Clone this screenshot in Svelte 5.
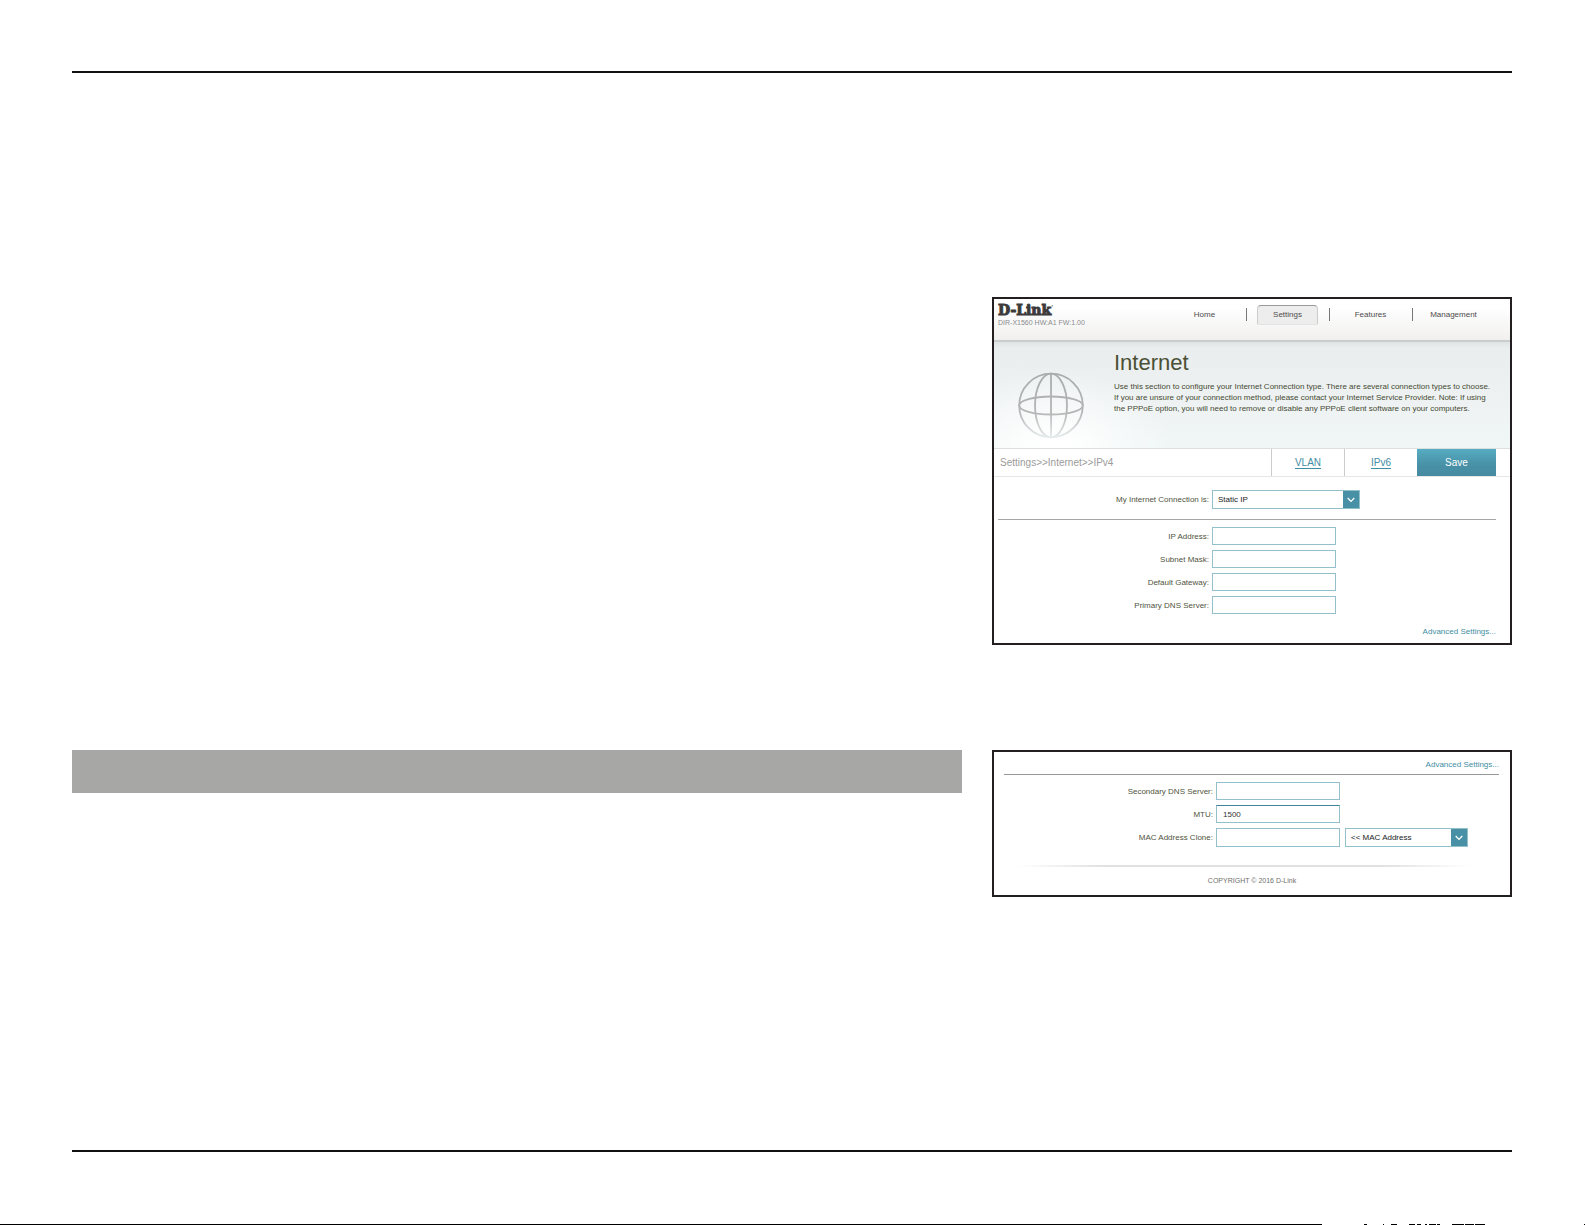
<script>
  const navItems = ['Home', 'Settings', 'Features', 'Management'];
  const fields = [
    { id: 'ip', label: 'IP Address:' },
    { id: 'mask', label: 'Subnet Mask:' },
    { id: 'gateway', label: 'Default Gateway:' },
    { id: 'dns1', label: 'Primary DNS Server:' }
  ];
  const edgeMarks = [
    [0, 1322], [1364, 3], [1383, 1], [1391, 6], [1409, 6], [1417, 4],
    [1425, 2], [1429, 7], [1437, 3], [1452, 12], [1465, 9], [1475, 10], [1584, 1]
  ];
</script>

{#snippet arrow()}
  <span class="arrow" aria-hidden="true">
    <svg viewBox="0 0 17 17"><path d="M5 7l3.5 3.5L12 7" fill="none" stroke="#fff" stroke-width="1.4" /></svg>
  </span>
{/snippet}

<div class="page">
  <main class="sheet">
    <section class="panel" aria-label="Internet settings">
      <header class="top">
        <div class="brand">
          <div class="logo">D-Link<span class="dot">·</span></div>
          <div class="model">DIR-X1560 HW:A1 FW:1.00</div>
        </div>
        <nav>
          {#each navItems as item}
            <div class="cell"><a href="#{item}" class:active={item === 'Settings'}>{item}</a></div>
          {/each}
        </nav>
      </header>
      <div class="banner">
        <svg class="globe" viewBox="0 0 66 68" aria-hidden="true">
          <defs>
            <linearGradient id="fade" gradientUnits="userSpaceOnUse" x1="0" y1="0" x2="0" y2="67">
              <stop offset="0" stop-color="#aaacac" />
              <stop offset="0.6" stop-color="#b4b6b6" />
              <stop offset="1" stop-color="#e9eeee" />
            </linearGradient>
          </defs>
          <g fill="none" stroke="url(#fade)" stroke-width="1.8">
            <circle cx="33" cy="33.5" r="31.8" />
            <ellipse cx="33" cy="33.5" rx="16" ry="31.8" />
            <ellipse cx="33" cy="33.5" rx="31.8" ry="9" />
            <path d="M33 2L33.1 65" />
          </g>
        </svg>
        <div class="intro">
          <h1>Internet</h1>
          <p>
            Use this section to configure your Internet Connection type. There are several connection types to choose.<br />
            If you are unsure of your connection method, please contact your Internet Service Provider. Note: If using<br />
            the PPPoE option, you will need to remove or disable any PPPoE client software on your computers.
          </p>
        </div>
      </div>
      <div class="toolbar">
        <div class="crumbs">Settings&gt;&gt;Internet&gt;&gt;IPv4</div>
        <div class="tab"><a href="#vlan">VLAN</a></div>
        <div class="tab"><a href="#ipv6">IPv6</a></div>
        <button class="save" type="button">Save</button>
      </div>
      <div class="connection row">
        <label for="type">My Internet Connection is:</label>
        <div class="select type">
          <select id="type"><option>Static IP</option></select>
          {@render arrow()}
        </div>
      </div>
      <div class="fields">
        {#each fields as f}
          <div class="row">
            <label for={f.id}>{f.label}</label>
            <input id={f.id} type="text" />
          </div>
        {/each}
      </div>
      <a class="advanced" href="#advanced">Advanced Settings...</a>
    </section>

    <div class="bar"></div>

    <section class="panel second" aria-label="Advanced settings">
      <a class="advanced" href="#advanced-open">Advanced Settings...</a>
      <div class="fields">
        <div class="row">
          <label for="dns2">Secondary DNS Server:</label>
          <input id="dns2" type="text" />
        </div>
        <div class="row">
          <label for="mtu">MTU:</label>
          <input id="mtu" class="strong" type="text" value="1500" />
        </div>
        <div class="row">
          <label for="mac">MAC Address Clone:</label>
          <div class="pair">
            <input id="mac" type="text" />
            <div class="select mac">
              <select aria-label="MAC address source"><option>&lt;&lt; MAC Address</option></select>
              {@render arrow()}
            </div>
          </div>
        </div>
      </div>
      <footer>COPYRIGHT © 2016 D-Link</footer>
    </section>
  </main>
  <svg class="edge" viewBox="0 0 1585 1" preserveAspectRatio="none" aria-hidden="true">
    {#each edgeMarks as [x, w]}<rect {x} y="0" width={w} height="1" />{/each}
  </svg>
</div>

<style>
  :global(body) { margin: 0; background: #fff; }
  * { box-sizing: border-box; }
  .page {
    min-height: 100vh;
    display: flex;
    flex-direction: column;
    padding: 71px 73px 0 72px;
    font-family: "Liberation Sans", Arial, sans-serif;
    font-size: 8px;
    color: #4f543e;
  }
  .sheet {
    flex: 1;
    display: grid;
    grid-template-columns: 89fr 52fr;
    column-gap: 30px;
    row-gap: 105px;
    align-content: start;
    align-items: start;
    border-top: 2px solid #111;
    border-bottom: 2px solid #111;
    padding-top: 224px;
    margin-bottom: 72px;
  }
  .edge { display: block; width: calc(100% + 145px); height: 1px; margin: 0 -73px 0 -72px; }
  .panel { grid-column: 2; border: 2px solid #231f20; background: #fff; }
  .panel:not(.second) { --label: 211px; }
  .bar { grid-column: 1; height: 43px; background: #a7a7a5; }

  .top {
    display: flex;
    justify-content: space-between;
    height: 43px;
    background: linear-gradient(#fff 20%, #f1f0ef);
    border-bottom: 2px solid #c9cdce;
  }
  .brand { padding: 3px 0 0 4px; }
  .logo {
    font: bold 14px/17px "DejaVu Serif", serif;
    color: #3c3a3b;
    -webkit-text-stroke: 1px #3c3a3b;
  }
  .dot { font-size: 6px; vertical-align: top; line-height: 8px; -webkit-text-stroke: 0; }
  .model { font-size: 7px; line-height: 8px; color: #8a8c8e; }
  nav { display: grid; grid-template-columns: repeat(4, 83px); margin-right: 15px; padding-top: 6px; height: 26px; }
  .cell { position: relative; display: flex; justify-content: center; }
  .cell + .cell::before { content: ""; position: absolute; left: 0; top: 3px; width: 1px; height: 13px; background: #777; }
  .cell a {
    width: 61px;
    height: 20px;
    border: 1px solid transparent;
    line-height: 18px;
    text-align: center;
    color: #4c4c4c;
    text-decoration: none;
  }
  .cell a.active {
    border-color: #999 #ccc #e4e4e4;
    border-radius: 4px 4px 2px 2px;
    background: #eeeded;
  }

  .banner {
    display: grid;
    grid-template-columns: 66px 1fr;
    column-gap: 30px;
    height: 106px;
    padding: 0 0 0 24px;
    background:
      radial-gradient(ellipse 120px 80px at 60px 100%, #fff 10%, #fff0),
      linear-gradient(#dfe3e4, #e8ecee00 6px),
      linear-gradient(#e9edee, #eef2f3 60%, #f0f6f6);
  }
  .globe { width: 66px; height: 68px; margin-top: 30px; }
  h1 { margin: 9px 0 0; font-size: 22px; line-height: 24px; font-weight: 400; color: #4b4f35; }
  p { margin: 6px 0 0; line-height: 11px; white-space: nowrap; color: #454a32; }

  .toolbar {
    display: flex;
    height: 29px;
    padding-right: 14px;
    border-top: 1px solid #dcdfdf;
    border-bottom: 1px solid #e6e8e8;
    font-size: 10px;
    line-height: 27px;
  }
  .crumbs { flex: 1; padding-left: 6px; color: #9b9b9b; }
  .tab { width: 73px; border-left: 1px solid #ccc; text-align: center; }
  .tab a { color: #3f8ea3; text-underline-offset: 2px; }
  .save {
    width: 79px;
    padding: 0;
    border: 0;
    font: inherit;
    color: #fff;
    background: linear-gradient(#56adc1, #4890a6 60%, #478ba1);
  }

  .row {
    display: grid;
    grid-template-columns: var(--label) 1fr;
    column-gap: 3px;
    align-items: center;
  }
  label { text-align: right; white-space: nowrap; }
  input {
    width: 124px;
    height: 18px;
    padding: 0 6px;
    border: 1px solid #93c0ca;
    border-radius: 0;
    background: #fff;
    font: inherit;
    color: #333;
  }
  .strong { border-top-color: #3f8797; }
  .select { position: relative; height: 19px; }
  .type { width: 148px; }
  .mac { width: 123px; }
  select {
    width: 100%;
    height: 100%;
    padding: 0 5px;
    border: 1px solid #93c0ca;
    border-radius: 0;
    background: #fff;
    appearance: none;
    font: inherit;
    color: #222;
  }
  .arrow {
    position: absolute;
    top: 1px;
    right: 1px;
    bottom: 1px;
    width: 16px;
    background: #4890a5;
    pointer-events: none;
  }
  .arrow svg { display: block; width: 16px; height: 17px; }
  .connection { margin: 0 14px 0 4px; padding: 13px 0 10px; border-bottom: 1px solid #a5a5a5; }
  .fields { display: grid; row-gap: 5px; margin: 7px 14px 0 4px; }
  .advanced {
    display: block;
    margin: 13px 14px 0 4px;
    padding-bottom: 6px;
    line-height: 10px;
    text-align: right;
    color: #3f8ea3;
    text-decoration: none;
  }

  .second { --label: 209px; }
  .second .advanced { margin: 8px 11px 0 10px; padding-bottom: 4px; border-bottom: 1px solid #949898; }
  .second .fields { margin-left: 10px; margin-right: 11px; }
  .pair { display: flex; gap: 5px; }
  .pair input { height: 19px; }
  footer {
    margin: 18px 40px 0 23px;
    padding: 10px 0 10px 17px;
    border-top: 2px solid;
    border-image: linear-gradient(90deg, #fff, #e0e0e0 20%, #e0e0e0 80%, #fff) 1;
    font-size: 7px;
    line-height: 8px;
    text-align: center;
    color: #70706b;
  }
</style>
